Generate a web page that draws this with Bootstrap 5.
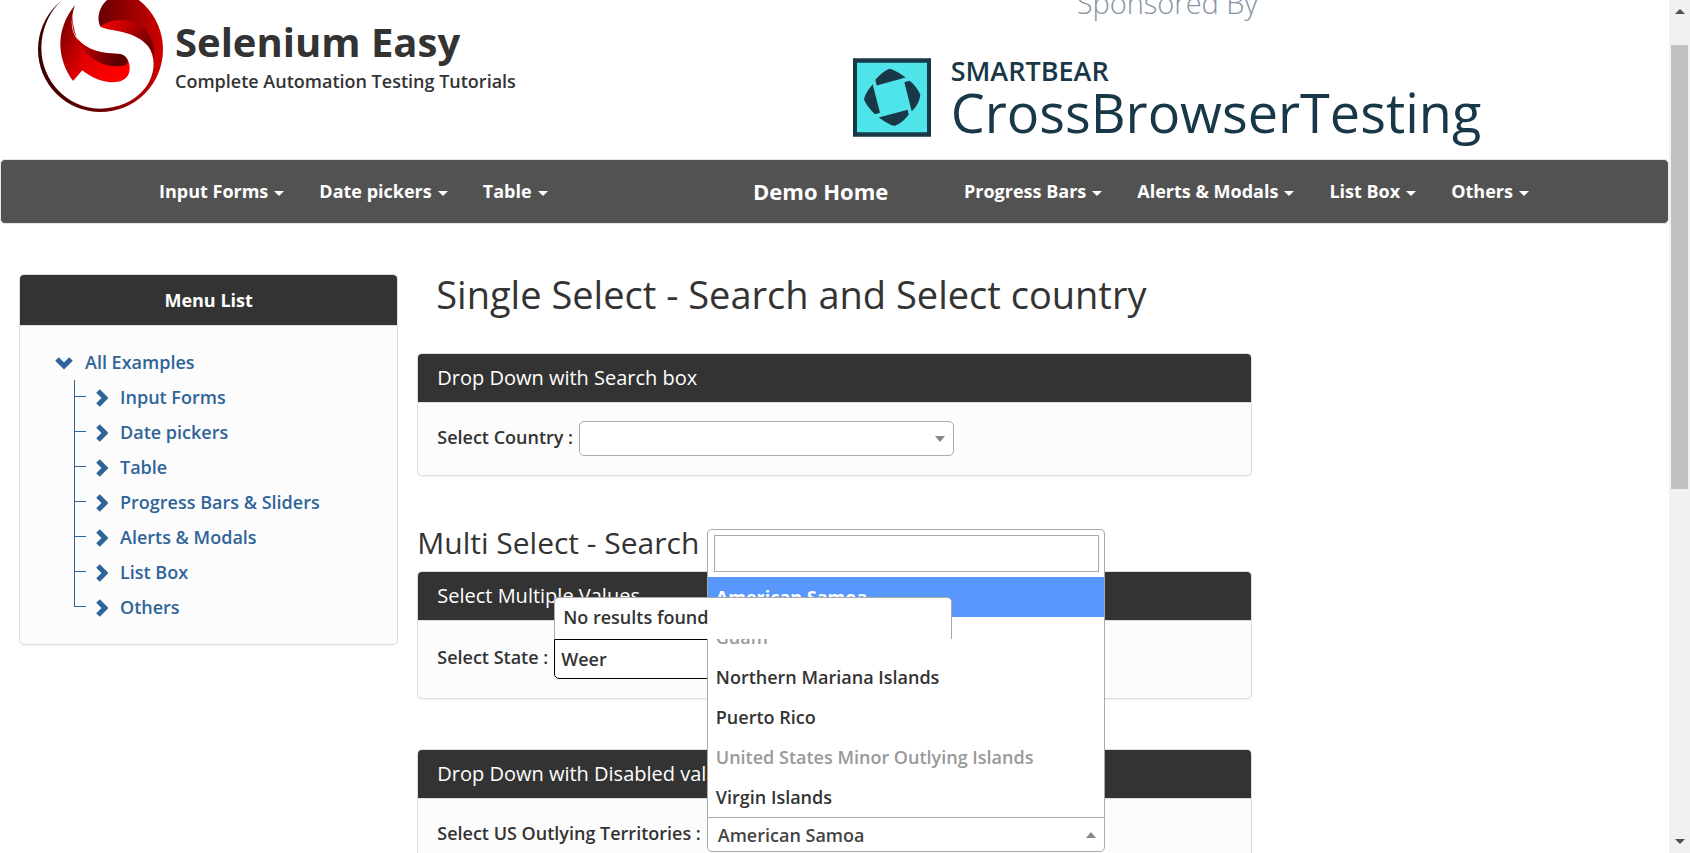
<!DOCTYPE html>
<html lang="en">
<head>
<meta charset="utf-8">
<meta name="viewport" content="width=device-width, initial-scale=1">
<title>Selenium Easy - Single Select</title>
<link rel="stylesheet" href="https://cdn.jsdelivr.net/npm/bootstrap@5.3.0/dist/css/bootstrap.min.css">
<style>
body{font-family:"Open Sans","Noto Sans",sans-serif;font-size:18px;line-height:25px;font-weight:600;color:#333;background:#fff}
a{text-decoration:none}
.site-head{height:159px;padding:0 38px}
.brand-logo{width:125px;height:125px;margin-bottom:47px}
.brand-name{font-size:40px;line-height:50px;font-weight:700;margin:0 0 2px}
.brand-sub{margin:0 0 65px}
.brand-text{margin-left:12px}
.sponsor{width:52%;padding-left:50px;color:#183747;margin-bottom:10px}
.sponsor-by{font-size:29px;line-height:40px;font-weight:300;color:#8593a3;padding-left:224px;margin-bottom:33px}
.sponsor-mark{width:78px;height:79px;margin-bottom:12px}
.sponsor-maker{font-size:27px;line-height:30px;font-weight:600}
.sponsor-name{font-size:54px;line-height:52px;font-weight:400;margin-bottom:11px}
.main-nav{background:#525252;border:1px solid #e7e7e7;border-radius:5px;height:65px;padding:0 0 0 158px}
.main-nav ul{gap:35px}
.main-nav a{color:#fff;font-weight:700}
.main-nav a.dropdown-toggle::after{border-width:5px;border-bottom:0;margin-left:6px;vertical-align:2px}
.nav-first{width:594px}
.nav-home{width:211px;font-size:22px}
.pane{background:#fcfcfc;border:1px solid #ddd;border-radius:5px;box-shadow:0 1px 1px rgba(0,0,0,.05)}
.pane-head{background:#333;color:#fff;border-bottom:1px solid #ddd;border-radius:4px 4px 0 0;padding:11px 19px;font-size:20px;line-height:26px;font-weight:400;margin:0}
.pane-body{padding:18px 19px 19px}
.side-head{text-align:center;font-size:18px;font-weight:700;padding:12px 19px}
.page-row{padding-top:50px;--bs-gutter-x:38px}
.tree{padding:19px 35px;line-height:35px}
.tree a{color:#2f6499}
.tree svg{fill:none;stroke:#2f6499;stroke-width:5}
.tree ul{margin:0 0 0 19px;padding:0}
.tree li li{position:relative;padding-left:22px}
.tree li li::before{content:"";position:absolute;left:0;top:0;height:100%;border-left:1px solid #2f6499}
.tree li li:last-child::before{height:17px}
.tree li li::after{content:"";position:absolute;left:0;top:16px;width:12px;border-top:1px solid #2f6499}
.title-one{font-size:38px;line-height:40px;font-weight:400;margin:0 0 39px;padding-left:19px}
.title-two{font-size:30px;line-height:32px;font-weight:400;margin:0 0 12px;white-space:nowrap}
.gap-a{margin-bottom:51px}
.gap-b{margin-bottom:50px}
.field{gap:6px}
.field label{margin-bottom:3px}
.picker{position:relative}
.picker-country{width:375px}
.picker-wide{width:398px}
.picker select,.picker input{display:block;width:100%;background:#fff;border:1px solid #aaa;border-radius:5px;color:#444;font-weight:600;appearance:none;outline:0}
.picker select{height:35px;padding:2px 10px 0}
.arrow::after{content:"";position:absolute;right:9px;top:15px;border:5px solid transparent;border-top:6px solid #888;border-bottom:0}
.arrow-up::after{border-top:0;border-bottom:6px solid #888}
.picker .typed{height:40px;border-color:#000;border-radius:0 0 5px 5px;color:#333;padding:0 6px}
.result-pop,.result-list{position:absolute;left:0;bottom:100%;width:100%;background:#fff;border:1px solid #aaa;border-bottom:0;border-radius:5px 5px 0 0}
.result-pop{z-index:5;height:42px;padding:7px 8px}
.result-list{z-index:4}
.picker .filter{height:37px;border-radius:0}
.filter-box{padding:5px 5px 5px 6px}
.opt{display:block;width:100%;height:40px;border:0;background:#fff;text-align:left;font-weight:600;color:#333;padding:0 8px}
.opt.active{background:#5897fb;color:#fff;font-weight:700}
.opt:disabled{color:#999}
.picker .flat-top{border-radius:0 0 5px 5px}
.bar{width:21px;background:#f1f1f1;padding:9px 2px}
.bar-thumb{height:444px;background:#c1c1c1;margin-top:31px}
.tri{width:0;height:0;border:5px solid transparent}
.tri-up{border-top:0;border-bottom:5px solid #505050}
.tri-down{border-bottom:0;border-top:5px solid #505050}
</style>
</head>
<body class="vh-100 overflow-hidden d-flex">
<div class="flex-grow-1 overflow-hidden">
  <header class="site-head d-flex justify-content-between align-items-end overflow-hidden">
    <div class="d-flex align-items-end">
      <svg class="brand-logo" viewBox="54 -39 375 375" aria-hidden="true">
        <defs>
          <linearGradient id="ring" x1="0" y1="0" x2="1" y2="0"><stop offset="0" stop-color="#3c0000"/><stop offset=".5" stop-color="#6a0000"/><stop offset="1" stop-color="#d00000"/></linearGradient>
          <linearGradient id="band" x1="0" y1="0" x2="1" y2=".4"><stop offset="0" stop-color="#f40000"/><stop offset=".45" stop-color="#c80000"/><stop offset="1" stop-color="#700000"/></linearGradient>
          <linearGradient id="leaf" x1="0" y1="0" x2="1" y2=".5"><stop offset="0" stop-color="#650000"/><stop offset=".55" stop-color="#e00000"/><stop offset="1" stop-color="#ff0000"/></linearGradient>
          <linearGradient id="fold" x1="0" y1="0" x2="1" y2=".4"><stop offset="0" stop-color="#e00000"/><stop offset=".5" stop-color="#a80000"/><stop offset="1" stop-color="#5c0000"/></linearGradient>
        </defs>
        <circle cx="241.500" cy="148.500" r="187.500" fill="url(#ring)"/>
        <path d="M275 -10C240 10 228 50 240 78C290 92 350 98 384 138C410 175 405 225 375 265C340 308 290 325 240 326C140 326 64 240 64 145C64 90 85 40 125 0L140 -12Z" fill="#fff"/>
        <path d="M240 80C268 58 310 54 345 68C385 84 405 125 402 172C398 150 380 125 350 110C315 92 268 92 240 80Z" fill="url(#band)"/>
        <path d="M165 15C148 65 152 105 185 130C220 158 250 161 295 162C320 165 330 185 329 207C328 238 300 250 265 246C235 242 210 230 187 211L159 243C110 175 105 90 165 15Z" fill="url(#leaf)"/>
        <path d="M158 40C155 120 205 198 290 199C312 199 323 195 323 183C320 165 305 161 290 161C240 160 190 148 166 106C155 85 156 60 158 40Z" fill="url(#fold)"/>
      </svg>
      <div class="brand-text">
        <h1 class="brand-name">Selenium Easy</h1>
        <p class="brand-sub">Complete Automation Testing Tutorials</p>
      </div>
    </div>
    <div class="sponsor">
      <div class="sponsor-by">Sponsored By</div>
      <div class="d-flex align-items-end">
        <svg class="sponsor-mark" viewBox="39 25 234 236" aria-hidden="true"><path d="M39 25H273V261H39Z" fill="#183747"/><path d="M51 39H261V247H51Z" fill="#4fe4ea"/><path d="M106 90Q128 65 148 57L157 59Q182 70 197 83L110 107ZM193 97L209 93Q230 110 241 135L238 150Q230 172 215 184ZM116 203L203 180L206 194Q190 218 165 228L155 226Q135 217 116 203ZM98 103L120 189L105 193Q84 175 72 150L75 138Q84 118 98 103Z" fill="#183747"/></svg>
        <div class="ms-3 ps-1">
          <div class="sponsor-maker">SMARTBEAR</div>
          <div class="sponsor-name">CrossBrowserTesting</div>
        </div>
      </div>
    </div>
  </header>

  <nav class="main-nav d-flex align-items-center" aria-label="Main">
    <ul class="nav-first list-unstyled d-flex m-0">
      <li><a class="dropdown-toggle" href="#">Input Forms</a></li>
      <li><a class="dropdown-toggle" href="#">Date pickers</a></li>
      <li><a class="dropdown-toggle" href="#">Table</a></li>
    </ul>
    <a class="nav-home" href="#">Demo Home</a>
    <ul class="list-unstyled d-flex m-0">
      <li><a class="dropdown-toggle" href="#">Progress Bars</a></li>
      <li><a class="dropdown-toggle" href="#">Alerts &amp; Modals</a></li>
      <li><a class="dropdown-toggle" href="#">List Box</a></li>
      <li><a class="dropdown-toggle" href="#">Others</a></li>
    </ul>
  </nav>

  <div class="page-row row mx-0 align-items-start">
    <aside class="col-3">
      <div class="pane">
        <h2 class="pane-head side-head">Menu List</h2>
        <ul class="tree list-unstyled m-0">
          <li>
            <a class="d-flex align-items-center" href="#"><svg width="18" height="14" viewBox="0 0 18 14"><path d="M2 3L9 10L16 3"/></svg><span class="ms-2 ps-1">All Examples</span></a>
            <ul class="list-unstyled">
              <li><a class="d-flex align-items-center" href="#"><svg width="12" height="18" viewBox="0 0 12 18"><path d="M2 2L9 9L2 16"/></svg><span class="ms-2 ps-1">Input Forms</span></a></li>
              <li><a class="d-flex align-items-center" href="#"><svg width="12" height="18" viewBox="0 0 12 18"><path d="M2 2L9 9L2 16"/></svg><span class="ms-2 ps-1">Date pickers</span></a></li>
              <li><a class="d-flex align-items-center" href="#"><svg width="12" height="18" viewBox="0 0 12 18"><path d="M2 2L9 9L2 16"/></svg><span class="ms-2 ps-1">Table</span></a></li>
              <li><a class="d-flex align-items-center" href="#"><svg width="12" height="18" viewBox="0 0 12 18"><path d="M2 2L9 9L2 16"/></svg><span class="ms-2 ps-1">Progress Bars &amp; Sliders</span></a></li>
              <li><a class="d-flex align-items-center" href="#"><svg width="12" height="18" viewBox="0 0 12 18"><path d="M2 2L9 9L2 16"/></svg><span class="ms-2 ps-1">Alerts &amp; Modals</span></a></li>
              <li><a class="d-flex align-items-center" href="#"><svg width="12" height="18" viewBox="0 0 12 18"><path d="M2 2L9 9L2 16"/></svg><span class="ms-2 ps-1">List Box</span></a></li>
              <li><a class="d-flex align-items-center" href="#"><svg width="12" height="18" viewBox="0 0 12 18"><path d="M2 2L9 9L2 16"/></svg><span class="ms-2 ps-1">Others</span></a></li>
            </ul>
          </li>
        </ul>
      </div>
    </aside>
    <main class="col-6 px-0">
      <h2 class="title-one">Single Select - Search and Select country</h2>
      <section class="pane gap-a">
        <h3 class="pane-head">Drop Down with Search box</h3>
        <div class="pane-body field d-flex align-items-center">
          <label for="country">Select Country :</label>
          <div class="picker picker-country arrow"><select id="country"><option></option></select></div>
        </div>
      </section>
      <h2 class="title-two">Multi Select - Search</h2>
      <section class="pane gap-b">
        <h3 class="pane-head">Select Multiple Values</h3>
        <div class="pane-body field d-flex align-items-center">
          <label for="state">Select State :</label>
          <div class="picker picker-wide">
            <input class="typed" id="state" type="text" value="Weer">
            <div class="result-pop">No results found</div>
          </div>
        </div>
      </section>
      <section class="pane">
        <h3 class="pane-head">Drop Down with Disabled val</h3>
        <div class="pane-body field d-flex align-items-center">
          <label for="territory">Select US Outlying Territories :</label>
          <div class="picker picker-wide arrow arrow-up">
            <select class="flat-top" id="territory"><option>American Samoa</option></select>
            <div class="result-list">
              <div class="filter-box"><input class="filter" type="text" aria-label="Search territories"></div>
              <button class="opt active" type="button">American Samoa</button>
              <button class="opt" type="button" disabled>Guam</button>
              <button class="opt" type="button">Northern Mariana Islands</button>
              <button class="opt" type="button">Puerto Rico</button>
              <button class="opt" type="button" disabled>United States Minor Outlying Islands</button>
              <button class="opt" type="button">Virgin Islands</button>
            </div>
          </div>
        </div>
      </section>
    </main>
  </div>
</div>
<div class="bar d-flex flex-column flex-shrink-0 align-items-center" aria-hidden="true">
  <div class="tri tri-up"></div>
  <div class="bar-thumb w-100"></div>
  <div class="tri tri-down mt-auto"></div>
</div>
<script src="https://cdn.jsdelivr.net/npm/bootstrap@5.3.0/dist/js/bootstrap.bundle.min.js"></script>
</body>
</html>
